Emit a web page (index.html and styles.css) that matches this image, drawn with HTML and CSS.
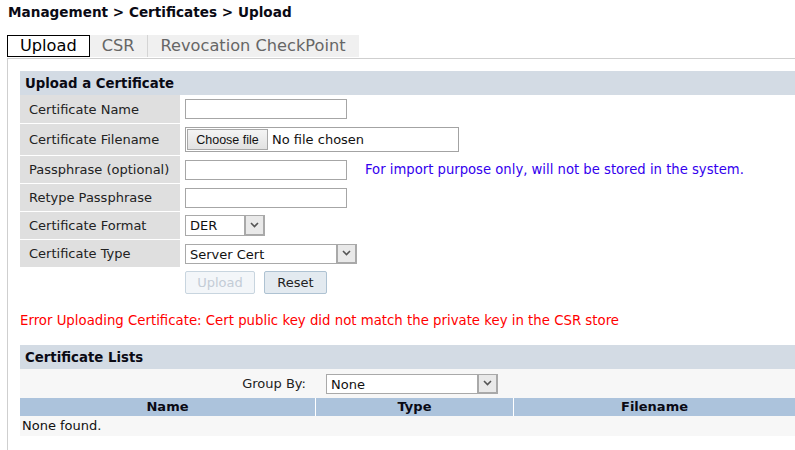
FILE: index.html
```html
<!DOCTYPE html>
<html>
<head>
<meta charset="utf-8">
<link rel="stylesheet" href="styles.css">
</head>
<body>
<div class="crumb">Management &gt; Certificates &gt; Upload</div>
<div class="tabs">
  <span class="tab tab-active">Upload</span>
  <span class="tab tab-csr">CSR</span>
  <span class="tab tab-rev">Revocation CheckPoint</span>
</div>
<div class="panel">
  <div class="sec-head">Upload a Certificate</div>
  <div class="form">
    <div class="lbl">Certificate Name</div>
    <div class="fld"><input class="txt" type="text"></div>
    <div class="lbl">Certificate Filename</div>
    <div class="fld">
      <div class="file"><span class="file-btn">Choose file</span><span class="file-name">No file chosen</span></div>
    </div>
    <div class="lbl">Passphrase (optional)</div>
    <div class="fld"><input class="txt" type="password"><span class="note">For import purpose only, will not be stored in the system.</span></div>
    <div class="lbl">Retype Passphrase</div>
    <div class="fld"><input class="txt" type="password"></div>
    <div class="lbl">Certificate Format</div>
    <div class="fld">
      <div class="sel sel-fmt"><span class="sel-val">DER</span><span class="sel-arrow"><svg width="9" height="6" viewBox="0 0 9 6"><polyline points="1,1 4.5,4.5 8,1" fill="none" stroke="#555" stroke-width="1.6"/></svg></span></div>
    </div>
    <div class="lbl">Certificate Type</div>
    <div class="fld">
      <div class="sel sel-type"><span class="sel-val">Server Cert</span><span class="sel-arrow"><svg width="9" height="6" viewBox="0 0 9 6"><polyline points="1,1 4.5,4.5 8,1" fill="none" stroke="#555" stroke-width="1.6"/></svg></span></div>
    </div>
  </div>
  <div class="actions">
    <button class="btn btn-upload" disabled>Upload</button>
    <button class="btn btn-reset">Reset</button>
  </div>
  <div class="error">Error Uploading Certificate: Cert public key did not match the private key in the CSR store</div>
  <div class="sec-head sec-lists">Certificate Lists</div>
  <div class="groupby">
    <div class="gb-label">Group By:</div>
    <div class="gb-field">
      <div class="sel sel-group"><span class="sel-val">None</span><span class="sel-arrow"><svg width="9" height="6" viewBox="0 0 9 6"><polyline points="1,1 4.5,4.5 8,1" fill="none" stroke="#555" stroke-width="1.6"/></svg></span></div>
    </div>
  </div>
  <div class="thead">
    <div class="th">Name</div>
    <div class="th">Type</div>
    <div class="th">Filename</div>
  </div>
  <div class="empty">None found.</div>
</div>
</body>
</html>
```

FILE: styles.css
```css
* { box-sizing: border-box; }
html, body {
  margin: 0;
  padding: 0;
  background: #fff;
  font-family: "DejaVu Sans", Verdana, sans-serif;
  font-size: 13px;
  color: #222;
}
.crumb {
  padding: 4px 0 0 8px;
  height: 20px;
  line-height: 16px;
  font-weight: bold;
  font-size: 13.6px;
  color: #0a0a14;
}
.tabs {
  margin: 15px 0 0 7px;
  display: flex;
  height: 22px;
}
.tab {
  display: block;
  height: 22px;
  line-height: 22px;
  font-size: 16.2px;
  color: #666;
  background: #f0f0f0;
}
.tab-active {
  background: #fff;
  color: #000;
  border: 1px solid #000;
  padding: 0 12px 0 12px;
  line-height: 20px;
}
.tab-csr {
  padding: 0 12px 0 12px;
  border-right: 1px solid #d4d4d4;
}
.tab-rev {
  padding: 0 13px;
}
.panel {
  margin: 1px 0 0 7px;
  border-left: 1px solid #cfcfcf;
  border-top: 1px solid #cfcfcf;
  padding: 12px 0 20px 12px;
}
.sec-head {
  height: 24px;
  line-height: 25px;
  padding-left: 5px;
  background: #d3dbe4;
  font-weight: bold;
  font-size: 13.3px;
  color: #0a0a14;
}
.form {
  display: grid;
  grid-template-columns: 160px 1fr;
  grid-template-rows: 28px 31px 27px 27px 27px 27px;
  row-gap: 1px;
}
.lbl {
  background: #dfdfdf;
  padding-left: 9px;
  display: flex;
  align-items: center;
  color: #222;
}
.fld {
  padding-left: 5px;
  display: flex;
  align-items: center;
}
.txt {
  width: 162px;
  height: 20px;
  border: 1px solid #a6a6a6;
  margin: 0;
  padding: 0 3px;
  font-family: inherit;
  font-size: 13px;
  background: #fff;
  outline: none;
}
.note {
  margin-left: 18px;
  color: #3300ee;
  font-size: 13.2px;
}
.file {
  width: 274px;
  height: 25px;
  border: 1px solid #a3a3a3;
  display: flex;
  align-items: center;
  padding-left: 1px;
}
.file-btn {
  height: 21px;
  width: 81px;
  border: 1px solid #a8a8a8;
  background: linear-gradient(#f4f4f4, #e2e2e2);
  font-family: "Liberation Sans", Arial, sans-serif;
  font-size: 12.5px;
  color: #111;
  display: flex;
  align-items: center;
  justify-content: center;
}
.file-name {
  margin-left: 4px;
  color: #111;
}
.sel {
  display: flex;
  height: 20px;
  border: 1px solid #a9a9a9;
  background: #fff;
  color: #111;
}
.sel-val {
  flex: 1;
  padding-left: 4px;
  line-height: 19px;
}
.sel-arrow {
  width: 20px;
  border-left: 2px solid #a9a9a9;
  border-right: 1px solid #a9a9a9;
  border-bottom: 1px solid #a9a9a9;
  background: #e9e9e9;
  display: flex;
  align-items: center;
  justify-content: center;
}
.sel-fmt { width: 80px; height: 21px; }
.sel-type { width: 172px; }
.sel-group { width: 172px; }
.actions {
  display: flex;
  gap: 9px;
  padding: 4px 0 0 165px;
}
.btn {
  height: 23px;
  margin: 0;
  font-family: inherit;
  font-size: 13px;
  border-radius: 2px;
  padding: 0;
}
.btn-upload {
  width: 70px;
  background: #f3f6f9;
  border: 1px solid #c8d5df;
  color: #c3ccd6;
}
.btn-reset {
  width: 63px;
  background: #e3eaf0;
  border: 1px solid #aec2d2;
  color: #222;
}
.error {
  margin-top: 19px;
  line-height: 16px;
  color: #f00;
  font-size: 13.3px;
}
.sec-lists {
  margin-top: 16px;
}
.groupby {
  display: grid;
  grid-template-columns: 295px 1fr;
  column-gap: 1px;
  height: 29px;
  background: #f7f7f7;
}
.gb-label {
  text-align: right;
  padding-right: 9px;
  line-height: 29px;
}
.gb-field {
  padding-left: 10px;
  display: flex;
  align-items: center;
}
.thead {
  display: grid;
  grid-template-columns: 295px 197px 1fr;
  column-gap: 1px;
  background: #fff;
  height: 18px;
}
.th {
  background: #acc3dc;
  text-align: center;
  font-weight: bold;
  line-height: 18px;
  color: #0a0a14;
}
.empty {
  height: 20px;
  line-height: 20px;
  padding-left: 2px;
  background: #f7f7f7;
  color: #111;
}
```
